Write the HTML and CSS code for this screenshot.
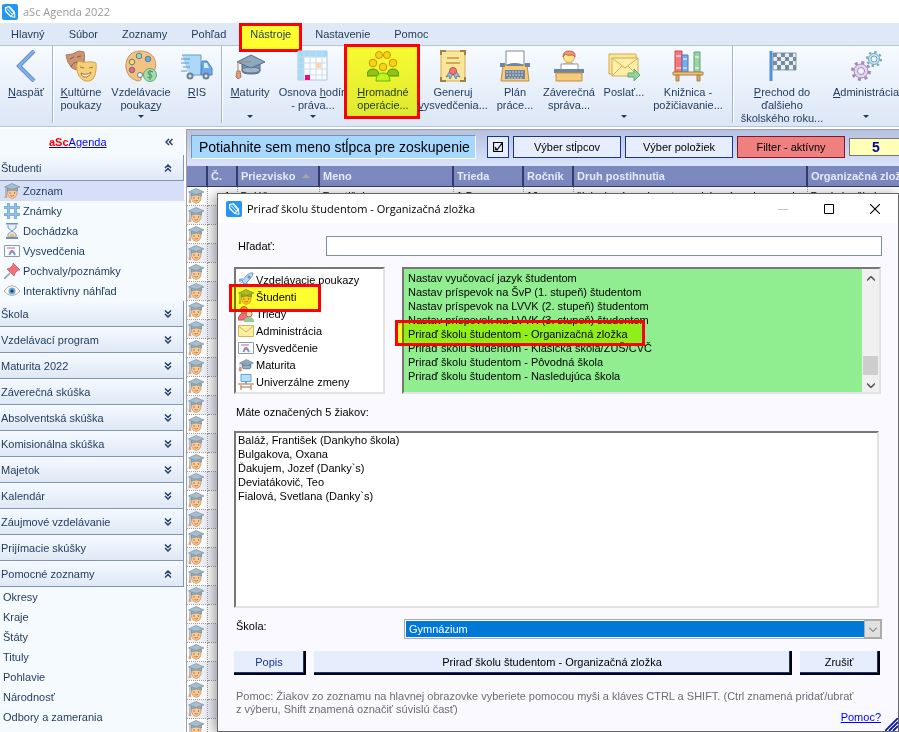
FILE: index.html
```html
<!DOCTYPE html>
<html lang="sk">
<head>
<meta charset="utf-8">
<title>aSc Agenda 2022</title>
<link rel="stylesheet" href="styles.css">
</head>
<body>
<svg class="sprite" aria-hidden="true">
  <symbol id="logo" viewBox="0 0 16 16"><rect width="16" height="16" rx="2" fill="#2496f5"/><path d="M3.500 3.500l4-.8 5 5.500-3.700 4.200-5-5z" fill="#2496f5" stroke="#fff" stroke-width="1.200"/><path d="M5 4.500l5.500 6M7 3.500l5 5.500M3.500 7l5 5.500 4.500.8-.5-4.500" fill="none" stroke="#fff"/></symbol>
  <symbol id="student" viewBox="0 0 16 16"><path d="M3.500 6v5q1 4 4.700 4.500Q12 15 13 11V6z" fill="#fcca91" stroke="#c58f5c" stroke-width=".7"/><path d="M3.500 8V5q5-2 10 0v3Q8 6 3.500 8z" fill="#94aec0" stroke="#718b9b" stroke-width=".7"/><path d="M8 .5L16 4 8 6.500.5 4z" fill="#a9bdca" stroke="#7892a0" stroke-width=".7"/><path d="M2 5v8" stroke="#7892a0"/><path d="M1 12h2l.3 3H.5z" fill="#dba27b"/><path d="M6 9.500v1M10.500 9.500v1" stroke="#49515b" stroke-width="1.200"/><path d="M6.500 12.500q1.700 1 3.500 0" fill="none" stroke="#b35d48" stroke-width=".8"/></symbol>
  <symbol id="cap" viewBox="0 0 32 32"><path d="M8 14v7q0 3 9 3t9-3v-7z" fill="#7b95ae" stroke="#536c87"/><ellipse cx="17" cy="20" rx="9" ry="3" fill="#9fb5c8" stroke="#60798f"/><path d="M17 5l14 7-14 6-14-6z" fill="#8fa8c2" stroke="#566f89"/><path d="M17 12H4v10" fill="none" stroke="#a68570"/><path d="M3 21h3l1 6-3 2-2-2z" fill="#dca078" stroke="#b37657"/></symbol>
  <symbol id="back" viewBox="0 0 32 32"><path d="M24 1L9 16l15 15" fill="none" stroke="#527bb6" stroke-width="4"/><path d="M24 1L9 16l15 15" fill="none" stroke="#80b2f0" stroke-width="2.500"/></symbol>
  <symbol id="masks" viewBox="0 0 32 32"><path d="M1 5Q7 5 14 1l5 1q2 11-3 17-5 2-9-1-5-5-6-13z" fill="#cb9472" stroke="#aa775b"/><path d="M5 9l4-2M12 7l4-1M6 17q2-5 7-5" stroke="#805c50" fill="none"/><path d="M13 11q6 2 10 1t8 1q1 10-3 16-3 3-8 2-7-3-8-11-1-5 1-9z" fill="#f6d078" stroke="#d3a34b"/><path d="M15 17l4 1M24 18l4-1M16 23q5 3 10-1-2 6-7 5-3-1-3-4z" stroke="#9c7545" fill="#fff3cf"/></symbol>
  <symbol id="palette" viewBox="0 0 32 32"><path d="M15 1C5 1 0 9 1 18q2 11 12 13 4 0 3-4-1-4 4-4 6 1 9-1C34 10 27 1 15 1z" fill="#f3c385" stroke="#c8935a"/><g stroke="#6b7a84"><circle cx="14" cy="6" r="2.800" fill="#91d9b0"/><circle cx="23" cy="9" r="2.800" fill="#6ca9e9"/><circle cx="7" cy="12" r="2.800" fill="#f8db63"/><circle cx="7" cy="20" r="2.800" fill="#ef6674"/><circle cx="15" cy="25" r="2.500" fill="#fff"/></g><circle cx="25" cy="25" r="6.500" fill="#a6dcac" stroke="#65a973"/><path d="M28 22q-5-2-5 1c0 2 4 1 4 3 0 3-5 1-5 1m3-7v10" fill="none" stroke="#4d8e60"/></symbol>
  <symbol id="truck" viewBox="0 0 32 32"><path d="M1 5h19v20H8" fill="#aed8f7" stroke="#659fc9"/><path d="M21 11h5l5 7v7H20z" fill="#6da9ec" stroke="#4c83ba"/><path d="M23 13h3l2 5h-5z" fill="#d2f2ff"/><path d="M0 9h9M0 13h8M2 17h7M0 21h6" stroke="#5597d3"/><g fill="#dae7ef" stroke="#6d8394" stroke-width="2"><circle cx="9" cy="26" r="2.500"/><circle cx="25" cy="26" r="2.500"/></g></symbol>
  <symbol id="calendar" viewBox="0 0 32 32"><path d="M1 1h29v29H1z" fill="#fbfdff" stroke="#a5c8df"/><path d="M1 1h29v6H7v23H1z" fill="#a6daf6"/><path d="M7 1v29M13 1v29M19 1v29M25 1v29M1 7h29M1 13h29M1 19h29M1 25h29" stroke="#c9dceb"/><path d="M19 13h5v5h-5z" fill="#ffd3ae"/><path d="M8 25h5v5H8z" fill="#ed087c"/></symbol>
  <symbol id="people" viewBox="0 0 32 32"><path d="M0 26q0-7 6-7t6 7zM20 26q0-7 6-7t6 7z" fill="#8fc46a" stroke="#499548"/><path d="M9 31q0-8 7-8t7 8z" fill="#c4f28b" stroke="#64b55c"/><g fill="#f8d36c" stroke="#c8933e"><circle cx="12" cy="5" r="3.500"/><circle cx="20" cy="5" r="3.500"/><circle cx="6" cy="13" r="3.800"/><circle cx="26" cy="13" r="3.800"/><circle cx="16" cy="17" r="3.800"/></g></symbol>
  <symbol id="diploma" viewBox="0 0 32 32"><path d="M4 1h24v30H4z" fill="#fae598" stroke="#d1ac50"/><path d="M4 5V1h5M23 1h5v4M4 27v4h5m14 0h5v-4" stroke="#a5803e" stroke-width="2" fill="none"/><path d="M10 8h12M9 13h14" stroke="#bd9945" stroke-width="1.500"/><path d="M13 21l-4 6 3-1 1 3 3-5 3 5 1-3 3 1-4-6z" fill="#8cbded" stroke="#6687af"/><circle cx="16" cy="21" r="3.500" fill="#f57573" stroke="#bd5350"/></symbol>
  <symbol id="typewriter" viewBox="0 0 32 32"><path d="M7 1h18v14H7z" fill="#fff" stroke="#79899b"/><path d="M4 15h24l2 16H2z" fill="#f6c97b" stroke="#c28d43"/><path d="M1 13h5v4H1zm25 0h5v4h-5zM7 16q2-3 9-3t9 3z" fill="#71869c"/><path d="M6 20h20v9H6z" fill="#71869c"/><path d="M7 22h18M7 25h18M9 28h14" stroke="#c8d7e4" stroke-dasharray="2 1"/></symbol>
  <symbol id="report" viewBox="0 0 32 32"><circle cx="16" cy="7" r="5.500" fill="#ffe48a" stroke="#cfaa59"/><path d="M10 7q0-6 6-6 7 0 6 6l-2-2q-6 1-8-1z" fill="#ee9674" stroke="#bd6952"/><path d="M9 16q7-7 14 0" fill="#ffe48a" stroke="#cfaa59"/><path d="M8 14h17v8H8z" fill="#fff" stroke="#8999a5"/><path d="M1 19h30v4H1z" fill="#71869c"/><path d="M3 23h26v8H3z" fill="#f6c97b" stroke="#c28d43"/></symbol>
  <symbol id="mail" viewBox="0 0 32 32"><path d="M1 4h27v20H1z" fill="#fbe69a" stroke="#cfab51"/><path d="M4 8h26v18H4z" fill="#fff0a9" stroke="#cfab51"/><path d="M4 8l13 10L30 8M4 26l10-10M30 26L20 16" fill="none" stroke="#cfab51"/><path d="M20 23h6v-4l6 6-6 6v-4h-6z" fill="#94d4a1" stroke="#63a977"/></symbol>
  <symbol id="books" viewBox="0 0 32 32"><path d="M3 1h7v21H3z" fill="#f4777e" stroke="#c34854"/><path d="M10 5h6v17h-6z" fill="#76aded" stroke="#4e78b7"/><path d="M22 2h6v20h-6z" fill="#99d3a6" stroke="#63a375"/><path d="M4 6h5M11 9h4M23 7h4M4 18h5m2 0h4m8 0h4" stroke="#fff"/><path d="M1 22h30v3H1z" fill="#eac16e" stroke="#ad8045"/><path d="M4 25h3v6H4zm21 0h3v6h-3z" fill="#d9aa60" stroke="#ad8045"/></symbol>
  <symbol id="flag" viewBox="0 0 32 32"><path d="M5 1v30" stroke="#4f91dc" stroke-width="3"/><path d="M7 3h23v17H7z" fill="#e9eef2" stroke="#8799a7"/><path d="M7 3h4v4H7zm8 0h4v4h-4zm8 0h4v4h-4zM11 7h4v4h-4zm8 0h4v4h-4zm8 0h3v4h-3zM7 11h4v4H7zm8 0h4v4h-4zm8 0h4v4h-4zM11 15h4v5h-4zm8 0h4v5h-4zm8 0h3v5h-3z" fill="#758c9f"/></symbol>
  <symbol id="gears" viewBox="0 0 32 32"><circle cx="11" cy="21" r="8.500" fill="none" stroke="#a28cb4" stroke-width="3" stroke-dasharray="3 3.680"/><circle cx="11" cy="21" r="7" fill="#e4d4f0" stroke="#a28cb4"/><circle cx="11" cy="21" r="3.500" fill="#f0f5fc" stroke="#a28cb4"/><circle cx="24" cy="9" r="7" fill="none" stroke="#76a7be" stroke-width="2" stroke-dasharray="2.500 3"/><circle cx="24" cy="9" r="5.500" fill="#c2e3f7" stroke="#76a7be"/><circle cx="24" cy="9" r="3" fill="#f0f5fc" stroke="#76a7be"/></symbol>
  <symbol id="hash" viewBox="0 0 16 16"><path d="M3.500 0h2v3.500h5V0h2v3.500H16v2h-3.500v5H16v2h-3.500V16h-2v-3.500h-5V16h-2v-3.500H0v-2h3.500v-5H0v-2h3.500zM5.500 5.500v5h5v-5z" fill="#8fc1ee" stroke="#5a8fc4" stroke-width=".6" fill-rule="evenodd"/></symbol>
  <symbol id="hourglass" viewBox="0 0 16 16"><path d="M2 .5h12M2 15h12" stroke="#6e92b5" stroke-width="2"/><path d="M4 2v3l4 3 4-3V2M4 14v-3l4-3 4 3v3" fill="#e1f1ff" stroke="#7898ba"/><path d="M4 14l4-4 4 4z" fill="#efb36c"/></symbol>
  <symbol id="cert" viewBox="0 0 16 16"><path d="M.5 2.500h15v11H.5z" fill="#f7faff" stroke="#8f98a5"/><path d="M3 5h8" stroke="#9a779f"/><path d="M7 8l-1.500 4M9 8l2 4" stroke="#6c9edb" stroke-width="2"/><circle cx="8" cy="8.500" r="1.700" fill="#e67482"/></symbol>
  <symbol id="pin" viewBox="0 0 16 16"><path d="M0 16l6-6" stroke="#8f9bab" stroke-width="1.500"/><path d="M3 6l7 7 1-3 3-3h2L9 0v2L6 5z" fill="#f27176" stroke="#bb5358" stroke-width=".7"/></symbol>
  <symbol id="eye" viewBox="0 0 16 16"><path d="M0 8q8-11 16 0-8 9-16 0z" fill="#fff" stroke="#b6a898"/><circle cx="8" cy="8" r="3.500" fill="#69a6df"/><circle cx="8" cy="8" r="1.500" fill="#243c60"/></symbol>
  <symbol id="rocket" viewBox="0 0 16 16"><path d="M4 9l5-6q4-3 6-2 0 3-3 6l-5 5z" fill="#b7d9fa" stroke="#789fc9"/><path d="M5 6L1 7v3l3-1m3 3l-1 3 3-1 1-4" fill="#79aced"/><path d="M4 10q-3 1-3 5 4-1 5-3z" fill="#e5f2fc" stroke="#9fbdd9"/><circle cx="11" cy="5" r="1.500" fill="#608fc8"/></symbol>
  <symbol id="classes" viewBox="0 0 16 16"><circle cx="6" cy="4" r="3.500" fill="#e7a06d" stroke="#a66659"/><path d="M0 14q1-7 6-7t6 7z" fill="#ee6e77" stroke="#bc505d"/><circle cx="11" cy="8" r="3" fill="#ffd4a0" stroke="#a66659"/><path d="M6 16q0-5 5-5t5 5z" fill="#91c99d"/></symbol>
  <symbol id="envelope" viewBox="0 0 16 16"><path d="M.5 2.500h15v11H.5z" fill="#fff09f" stroke="#d2b45d"/><path d="M.5 3L8 9l7.500-6" fill="none" stroke="#d2b45d"/></symbol>
  <symbol id="desk" viewBox="0 0 16 16"><path d="M3 .5h10v7H3z" fill="#aee1fb" stroke="#6ba0c6"/><path d="M8 8v2" stroke="#6ba0c6" stroke-width="2"/><path d="M0 10h16M3 11v5M13 11v5M3 13h10" stroke="#c09b7c" stroke-width="1.500"/></symbol>
  <symbol id="chev" viewBox="0 0 8 8"><path d="M1 .5l3 3 3-3M1 4l3 3 3-3" fill="none" stroke="#2a4266" stroke-width="1.500"/></symbol>
</svg>

<header class="titlebar"><svg class="i16"><use href="#logo"/></svg><span>aSc Agenda 2022</span></header>

<nav class="menu">
  <button>Hlavný</button><button>Súbor</button><button>Zoznamy</button><button>Pohľad</button><button class="marked"><i class="mark"></i><span class="over">Nástroje</span></button><button>Nastavenie</button><button>Pomoc</button>
</nav>

<div class="ribbon">
  <div class="group">
    <button class="tool w52"><svg><use href="#back"/></svg><span><u>N</u>aspäť</span></button>
  </div>
  <div class="group">
    <button class="tool w56"><svg><use href="#masks"/></svg><span><u>K</u>ultúrne<br>poukazy</span></button>
    <button class="tool w64 drop"><svg><use href="#palette"/></svg><span>Vzdelávacie<br>pouka<u>z</u>y</span></button>
    <button class="tool w48"><svg><use href="#truck"/></svg><span><u>R</u>IS</span></button>
  </div>
  <div class="group">
    <button class="tool w56 drop"><svg><use href="#cap"/></svg><span><u>M</u>aturity</span></button>
    <button class="tool w70 drop"><svg><use href="#calendar"/></svg><span>Osnova <u>h</u>odín<br>- práva...</span></button>
    <button class="tool w70 marked"><svg><use href="#people"/></svg><span><u>H</u>romadné<br>operácie...</span><i class="mark"></i></button>
    <button class="tool w70"><svg><use href="#diploma"/></svg><span>Generuj<br><u>v</u>ysvedčenia...</span></button>
    <button class="tool w54"><svg><use href="#typewriter"/></svg><span>Plán<br>práce...</span></button>
    <button class="tool w54"><svg><use href="#report"/></svg><span>Záverečná<br>správa...</span></button>
    <button class="tool w56 drop"><svg><use href="#mail"/></svg><span>Poslať...</span></button>
    <button class="tool w72"><svg><use href="#books"/></svg><span>Knižnica -<br>požičiavanie...</span></button>
  </div>
  <div class="group">
    <button class="tool w98"><svg><use href="#flag"/></svg><span><u>P</u>rechod do<br>ďalšieho<br>školského roku...</span></button>
    <button class="tool w70 drop"><svg><use href="#gears"/></svg><span><u>A</u>dministrácia</span></button>
  </div>
</div>

<div class="work">
  <aside class="side">
    <div class="brand"><a href="#"><b>aSc</b>Agenda</a><button class="collapse" aria-label="Zbaliť"><svg class="chev left"><use href="#chev"/></svg></button></div>
    <button class="head">Študenti<svg class="chev up"><use href="#chev"/></svg></button>
    <ul class="items">
      <li class="current"><a href="#"><svg class="i16"><use href="#student"/></svg>Zoznam</a></li>
      <li><a href="#"><svg class="i16"><use href="#hash"/></svg>Známky</a></li>
      <li><a href="#"><svg class="i16"><use href="#hourglass"/></svg>Dochádzka</a></li>
      <li><a href="#"><svg class="i16"><use href="#cert"/></svg>Vysvedčenia</a></li>
      <li><a href="#"><svg class="i16"><use href="#pin"/></svg>Pochvaly/poznámky</a></li>
      <li><a href="#"><svg class="i16"><use href="#eye"/></svg>Interaktívny náhľad</a></li>
    </ul>
    <button class="head">Škola<svg class="chev"><use href="#chev"/></svg></button>
    <button class="head">Vzdelávací program<svg class="chev"><use href="#chev"/></svg></button>
    <button class="head">Maturita 2022<svg class="chev"><use href="#chev"/></svg></button>
    <button class="head">Záverečná skúška<svg class="chev"><use href="#chev"/></svg></button>
    <button class="head">Absolventská skúška<svg class="chev"><use href="#chev"/></svg></button>
    <button class="head">Komisionálna skúška<svg class="chev"><use href="#chev"/></svg></button>
    <button class="head">Majetok<svg class="chev"><use href="#chev"/></svg></button>
    <button class="head">Kalendár<svg class="chev"><use href="#chev"/></svg></button>
    <button class="head">Záujmové vzdelávanie<svg class="chev"><use href="#chev"/></svg></button>
    <button class="head">Prijímacie skúšky<svg class="chev"><use href="#chev"/></svg></button>
    <button class="head">Pomocné zoznamy<svg class="chev up"><use href="#chev"/></svg></button>
    <ul class="items plain">
      <li><a href="#">Okresy</a></li><li><a href="#">Kraje</a></li><li><a href="#">Štáty</a></li><li><a href="#">Tituly</a></li><li><a href="#">Pohlavie</a></li><li><a href="#">Národnosť</a></li><li><a href="#">Odbory a zamerania</a></li>
    </ul>
  </aside>

  <main class="grid">
    <div class="tools">
      <div class="groupbox">Potiahnite sem meno stĺpca pre zoskupenie</div>
      <button class="btn tick" aria-label="Označiť"><svg viewBox="0 0 10 10"><path d="M.5.5h9v9h-9zM2 5l2 3 5.500-7.500M2 8l1-1" fill="none" stroke="#000" stroke-width="1.200"/></svg></button>
      <button class="btn">Výber stĺpcov</button>
      <button class="btn">Výber položiek</button>
      <button class="btn red">Filter - aktívny</button>
      <output class="count">5</output>
    </div>
    <table>
      <colgroup><col class="c20"><col class="c30"><col class="c82"><col class="c134"><col class="c70"><col class="c50"><col class="c234"><col></colgroup>
      <thead><tr><th></th><th>Č.</th><th>Priezvisko <span class="sort"></span></th><th>Meno</th><th>Trieda</th><th>Ročník</th><th>Druh postihnutia</th><th>Organizačná zložka</th></tr></thead>
      <tbody id="rows"></tbody>
    </table>
  </main>
</div>

<section class="dialog" role="dialog" aria-labelledby="dlg-title">
  <header class="dlg-head"><svg class="i16"><use href="#logo"/></svg><h1 id="dlg-title">Priraď školu študentom - Organizačná zložka</h1>
    <button aria-label="Minimalizovať" disabled><svg viewBox="0 0 10 10"><path d="M0 5.500h10" stroke="#c4c4c4"/></svg></button>
    <button aria-label="Maximalizovať"><svg viewBox="0 0 10 10"><path d="M.5.5h9v9h-9z" fill="none" stroke="#000"/></svg></button>
    <button aria-label="Zavrieť"><svg viewBox="0 0 10 10"><path d="M0 0l10 10M10 0L0 10" stroke="#000" stroke-width="1.100"/></svg></button>
  </header>
  <form class="dlg-body">
    <div class="search"><label for="find">Hľadať:</label><input id="find" type="text"></div>
    <div class="lists">
      <ul class="box cats">
        <li><svg class="i16"><use href="#rocket"/></svg>Vzdelávacie poukazy</li>
        <li class="marked"><svg class="i16"><use href="#student"/></svg>Študenti<i class="mark"></i></li>
        <li><svg class="i16"><use href="#classes"/></svg>Triedy</li>
        <li><svg class="i16"><use href="#envelope"/></svg>Administrácia</li>
        <li><svg class="i16"><use href="#cert"/></svg>Vysvedčenie</li>
        <li><svg class="i16"><use href="#cap"/></svg>Maturita</li>
        <li><svg class="i16"><use href="#desk"/></svg>Univerzálne zmeny</li>
      </ul>
      <div class="box ops">
        <ul>
          <li>Nastav vyučovací jazyk študentom</li>
          <li>Nastav príspevok na ŠvP (1. stupeň) študentom</li>
          <li>Nastav príspevok na LVVK (2. stupeň) študentom</li>
          <li>Nastav príspevok na LVVK (3. stupeň) študentom</li>
          <li class="marked">Priraď školu študentom - Organizačná zložka<i class="mark"></i></li>
          <li>Priraď školu študentom - Klasická škola/ZUŠ/CVČ</li>
          <li>Priraď školu študentom - Pôvodná škola</li>
          <li>Priraď školu študentom - Nasledujúca škola</li>
        </ul>
        <div class="scroll"><svg viewBox="0 0 8 5"><path d="M0 4.500l4-4 4 4" fill="none" stroke="#505050" stroke-width="1.500"/></svg><span class="thumb"></span><svg viewBox="0 0 8 5"><path d="M0 .5l4 4 4-4" fill="none" stroke="#505050" stroke-width="1.500"/></svg></div>
      </div>
    </div>
    <p class="caption">Máte označených 5 žiakov:</p>
    <ul class="box chosen">
      <li>Baláž, František (Dankyho škola)</li><li>Bulgakova, Oxana</li><li>Ďakujem, Jozef (Danky`s)</li><li>Deviatákovič, Teo</li><li>Fialová, Svetlana (Danky`s)</li>
    </ul>
    <div class="school"><label for="school">Škola:</label><div class="combo"><select id="school"><option>Gymnázium</option></select><span class="arrow"><svg viewBox="0 0 8 5"><path d="M0 .5l4 4 4-4" fill="none" stroke="#505050"/></svg></span></div></div>
    <div class="actions"><button type="button" class="act info">Popis</button><button type="button" class="act wide">Priraď školu študentom - Organizačná zložka</button><button type="button" class="act cancel">Zrušiť</button></div>
    <p class="help">Pomoc: Žiakov zo zoznamu na hlavnej obrazovke vyberiete pomocou myši a kláves CTRL a SHIFT. (Ctrl znamená pridať/ubrať<br>z výberu, Shift znamená označiť súvislú časť)</p>
    <a class="more" href="#">Pomoc?</a>
  </form>
  <svg class="grip" viewBox="0 0 13 13"><path d="M0 13L13 0M4 13l9-9M8 13l5-5" stroke="#0a1a9c" stroke-width="1.800"/></svg>
</section>
<script src="rows.js"></script>
</body>
</html>
```
FILE: styles.css
```css
* { box-sizing: border-box; }
html, body { height: 100%; }
body {
  margin: 0; display: flex; flex-direction: column; position: relative; overflow: hidden;
  font: 11px/14px "Liberation Sans", Arial, sans-serif; color: #1e395b; background: #fff;
}
button { font: inherit; color: inherit; background: none; border: 0; padding: 0; margin: 0; }
ul { list-style: none; margin: 0; padding: 0; }
p, h1 { margin: 0; font: inherit; }
.sprite { position: absolute; width: 0; height: 0; }
.i16 { width: 16px; height: 16px; flex: none; }
.marked, .over { position: relative; }
.mark { position: absolute; border: 3px solid #f00; pointer-events: none; }
.mark::before { content: ""; position: absolute; inset: 0; background: #ffff30; mix-blend-mode: multiply; }

.titlebar { display: flex; align-items: center; gap: 5px; height: 23px; flex: none; padding-left: 2px; background: #fff; color: #999; font: 11px/16px "Open Sans", sans-serif; }
.menu { display: flex; flex: none; height: 23px; padding-left: 11px; gap: 24px; background: #dfe8f6; border-bottom: 1px solid #b4c5e0; }
.menu .mark { inset: 0 -11px -7px; }
.menu .mark::before { mix-blend-mode: normal; }

.ribbon { display: flex; flex: none; height: 81px; background: linear-gradient(#f7fbff, #dbe6f6); border-bottom: 1px solid #b4c5e0; }
.group { display: flex; flex: none; border-right: 1px solid #a1b6d3; box-shadow: 1px 0 #fff; margin-bottom: 3px; }
.group:last-child { border: 0; box-shadow: none; }
.group:nth-child(3) { padding-right: 8px; }
.tool { display: flex; flex-direction: column; align-items: center; position: relative; padding-top: 4px; flex: none; white-space: nowrap; line-height: 13px; }
.tool svg { width: 32px; height: 32px; flex: none; margin-bottom: 4px; }
.tool.drop::after { content: ""; position: absolute; top: 69px; left: calc(50% - 3px); border: 3px solid transparent; border-top-color: #1e395b; border-bottom: 0; }
.tool .mark { inset: -2px -2px 4px -4px; }
.w48 { width: 48px; } .w52 { width: 52px; } .w54 { width: 54px; } .w56 { width: 56px; } .w64 { width: 64px; }
.w70 { width: 70px; } .w72 { width: 72px; } .w98 { width: 98px; }

.work { display: flex; flex: 1; min-height: 0; padding-top: 2px; }
.side { width: 184px; flex: none; background: #f5faff; overflow: hidden; }
.brand { display: flex; align-items: center; height: 26px; padding-left: 49px; }
.brand a { color: #00f; } .brand b { color: #f00; }
.collapse { margin-left: auto; padding-right: 11px; display: flex; }
.chev { width: 8px; height: 8px; }
.up { transform: rotate(180deg); } .left { transform: rotate(90deg); }
.head { display: flex; align-items: center; justify-content: space-between; width: 100%; height: 26px; padding: 0 11px 0 1px; background: linear-gradient(#f5faff, #dfe8f5); border-right: 1px solid #8196b2; border-bottom: 1px solid #8196b2; }
.items li { height: 20px; } .items .current { background: #d6dff7; }
.items a { display: flex; align-items: center; gap: 3px; height: 20px; padding-left: 4px; color: inherit; text-decoration: none; }
.plain a { padding-left: 3px; }

.grid { flex: 1; min-width: 0; overflow: hidden; margin-left: 2px; border-left: 1px solid #a0a0a0; border-top: 1px solid #a0a0a0; background: #fff; }
.tools { display: flex; align-items: center; gap: 4px; height: 36px; padding: 0 0 3px 4px; background: linear-gradient(#b6c1e0, #dbe4fc); color: #000; }
.groupbox { flex: none; height: 24px; width: 285px; margin-right: 7px; padding-left: 7px; background: #a6d8ff; border: 1px solid #7991ad; border-color: #7991ad #fff #fff #7991ad; font-size: 14px; line-height: 23px; white-space: nowrap; }
.btn { width: 108px; height: 22px; flex: none; background: #e6edfd; border: 1px solid #17358f; }
.tick { width: 22px; display: grid; place-items: center; } .tick svg { width: 10px; height: 10px; }
.red { background: #f08080; border-color: #7a1c28; }
.count { width: 54px; height: 18px; flex: none; background: #ffffb8; border: 1px solid #777; color: #0000a8; font-weight: bold; font-size: 14px; line-height: 16px; text-align: center; }
table { width: 780px; table-layout: fixed; border-collapse: collapse; color: #000; }
.c20 { width: 20px; } .c30 { width: 30px; } .c82 { width: 82px; } .c134 { width: 134px; }
.c70 { width: 70px; } .c50 { width: 50px; } .c234 { width: 234px; }
th { height: 20px; padding: 0 3px; background: #7b89bf; color: #e6e9f8; text-align: left; white-space: nowrap; overflow: hidden; border-right: 2px solid #333b70; border-bottom: 1px solid #333b70; }
.sort { display: inline-block; margin: 0 0 2px 4px; border: 4px solid transparent; border-bottom-color: #a8a8a8; border-top: 0; }
td { height: 19px; padding: 0 3px; line-height: 14px; white-space: nowrap; overflow: hidden; border-right: 1px dotted #999; border-bottom: 1px dotted #999; }
td:first-child { padding: 0 0 0 1px; } td:nth-child(2) { text-align: right; } td svg { display: block; }
tbody tr:nth-child(even) { background: #eef1fa; }

.dialog { position: absolute; left: 217px; right: 0; top: 193px; bottom: 0; border: 1px solid #666; background: #f9f9ff; color: #000; box-shadow: -3px 2px 12px rgba(0, 0, 0, .4); }
.dlg-head { display: flex; align-items: center; height: 29px; padding-left: 8px; background: #fff; font: 11px/16px "Open Sans", sans-serif; }
.dlg-head h1 { margin-left: 5px; flex: 1; }
.dlg-head button { width: 46px; height: 29px; display: grid; place-items: center; }
.dlg-head svg:not(.i16) { width: 10px; height: 10px; }
.dlg-body { padding: 13px 16px 0; }
.search { display: flex; align-items: center; }
.search label { width: 92px; padding-left: 4px; }
.search input { flex: 1; height: 20px; border: 1px solid #7f8fa3; background: #fff; padding: 0 3px; font: inherit; }
.box { border: 2px solid; border-color: #777 #e3e3e3 #e3e3e3 #777; background: #fff; }
.lists { display: flex; gap: 17px; height: 127px; margin: 11px 1px 0 0; }
.cats { width: 151px; flex: none; padding: 2px 0 0 2px; }
.cats li { display: flex; align-items: center; gap: 2px; height: 17px; white-space: nowrap; }
.cats .mark { inset: -4px 62px -7px -9px; }
.ops { flex: 1; display: flex; background: #90ee90; }
.ops ul { flex: 1; padding: 2px 0 0 4px; }
.ops li { width: max-content; height: 14px; }
.ops .mark { inset: -7px -17px -5px -13px; }
.scroll { width: 17px; display: flex; flex-direction: column; align-items: center; padding: 7px 0 4px; background: #f0f0f0; }
.scroll svg { width: 8px; height: 5px; }
.thumb { width: 15px; height: 19px; margin: auto 0 8px; background: #cdcdcd; }
.caption { margin: 11px 0 12px 2px; }
.chosen { height: 177px; margin-right: 3px; padding: 0 0 0 2px; }
.school { display: flex; align-items: flex-start; margin-top: 11px; }
.school label { width: 170px; padding-left: 2px; }
.combo { flex: 1; position: relative; }
select { display: block; width: 100%; height: 20px; appearance: none; border: 1px solid #aaa; box-shadow: inset 0 0 0 1px #fff; background: #0078d7; color: #fff; border-radius: 0; padding: 0 4px; font: inherit; }
.arrow { position: absolute; inset: 1px 1px 1px auto; width: 17px; display: grid; place-items: center; background: #e1e1e1; border: 1px solid #adadad; pointer-events: none; }
.arrow svg { width: 8px; height: 5px; }
.actions { display: flex; gap: 8px; margin: 12px 2px 0 0; }
.act { height: 24px; background: #e6edfd; border: solid #000; border-width: 0 2px 2px 0; box-shadow: inset -1px -1px #17358f; }
.info { width: 72px; color: #17358f; } .wide { flex: 1; } .cancel { width: 80px; }
.help { margin: 15px 0 0 2px; color: #6d6d6d; line-height: 13px; white-space: nowrap; }
.more { display: block; width: max-content; margin: -6px 1px 0 auto; color: #00f; }
.grip { position: absolute; right: 0; bottom: 0; width: 13px; height: 13px; }
```
FILE: rows.js
```js
const first = ["Baláž", "František", "1.B", "10", "žiak chorý a zdravotne oslabený - pri poverel", "Dankyho škola"];
const body = document.getElementById("rows");
for (let n = 1; n <= 29; n++) {
  const row = body.insertRow();
  row.insertCell().innerHTML = '<svg class="i16"><use href="#student"/></svg>';
  row.insertCell().textContent = n + ".";
  for (let c = 0; c < 6; c++) row.insertCell().textContent = n === 1 ? first[c] : "";
}
```
